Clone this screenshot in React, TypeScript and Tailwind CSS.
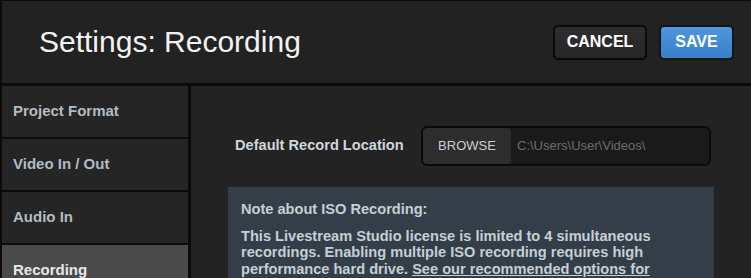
export default function App() {
  const items = ["Project Format", "Video In / Out", "Audio In", "Recording"];
  return (
    <div className="w-[751px] h-[278px] overflow-hidden bg-[#0b0b0b] pl-[2px] pt-[1px] font-['Liberation_Sans',Arial,sans-serif]">
      <div className="h-[82px] bg-[#222222] flex items-center justify-between pl-[37px] pr-[17px]">
        <h1 className="text-[30px] text-[#f2f2f2] leading-none">Settings: Recording</h1>
        <div className="flex gap-[12px]">
          <button className="w-[94px] h-[35px] rounded-[5px] border-2 border-[#0a0a0a] bg-gradient-to-b from-[#2e2e2e] to-[#262626] text-white font-bold text-[16px]">
            CANCEL
          </button>
          <button className="w-[75px] h-[35px] rounded-[5px] border-2 border-[#151515] bg-gradient-to-b from-[#4d97de] to-[#3a7fcb] text-white font-bold text-[16px]">
            SAVE
          </button>
        </div>
      </div>
      <div className="flex mt-[3px] gap-[3px] h-[200px]">
        <div className="w-[186px] flex flex-col gap-[2px]">
          {items.map((label, i) => (
            <div
              key={label}
              className={
                i === 3
                  ? "h-[51px] shrink-0 flex items-center pl-[11px] bg-[#4a4a4a] text-[#e6e8ea] font-bold text-[15px]"
                  : "h-[51px] shrink-0 flex items-center pl-[11px] bg-[#252525] text-[#b3bbc3] font-bold text-[15px]"
              }
            >
              {label}
            </div>
          ))}
        </div>
        <div className="flex-1 bg-[#232323] pt-[40px] pl-[37px] pr-[37px]">
          <div className="flex items-center pl-[7px]">
            <span className="text-[14.6px] font-bold text-[#d0d6dc] w-[186px]">Default Record Location</span>
            <div className="w-[290px] h-[40px] rounded-[6px] border-2 border-[#0a0a0a] bg-[#1a1a1a] flex items-center overflow-hidden">
              <div className="w-[88px] h-full bg-[#2d2d2d] rounded-[4px] flex items-center justify-center text-[13px] text-[#c8d0d8]">
                BROWSE
              </div>
              <span className="ml-[6px] text-[13px] text-[#6c6c6c]">C:\Users\User\Videos\</span>
            </div>
          </div>
          <div className="mt-[21px] bg-[#333e48] pt-[14px] px-[13px] text-[14.6px] font-bold text-[#c6ced6] leading-[16.5px]">
            <p>Note about ISO Recording:</p>
            <p className="mt-[10px]">
              This Livestream Studio license is limited to 4 simultaneous
              <br />
              recordings. Enabling multiple ISO recording requires high
              <br />
              performance hard drive.{" "}
              <span className="underline">
                See our recommended options for
                <br />
                internal and external drives.
              </span>
            </p>
          </div>
        </div>
      </div>
    </div>
  );
}
